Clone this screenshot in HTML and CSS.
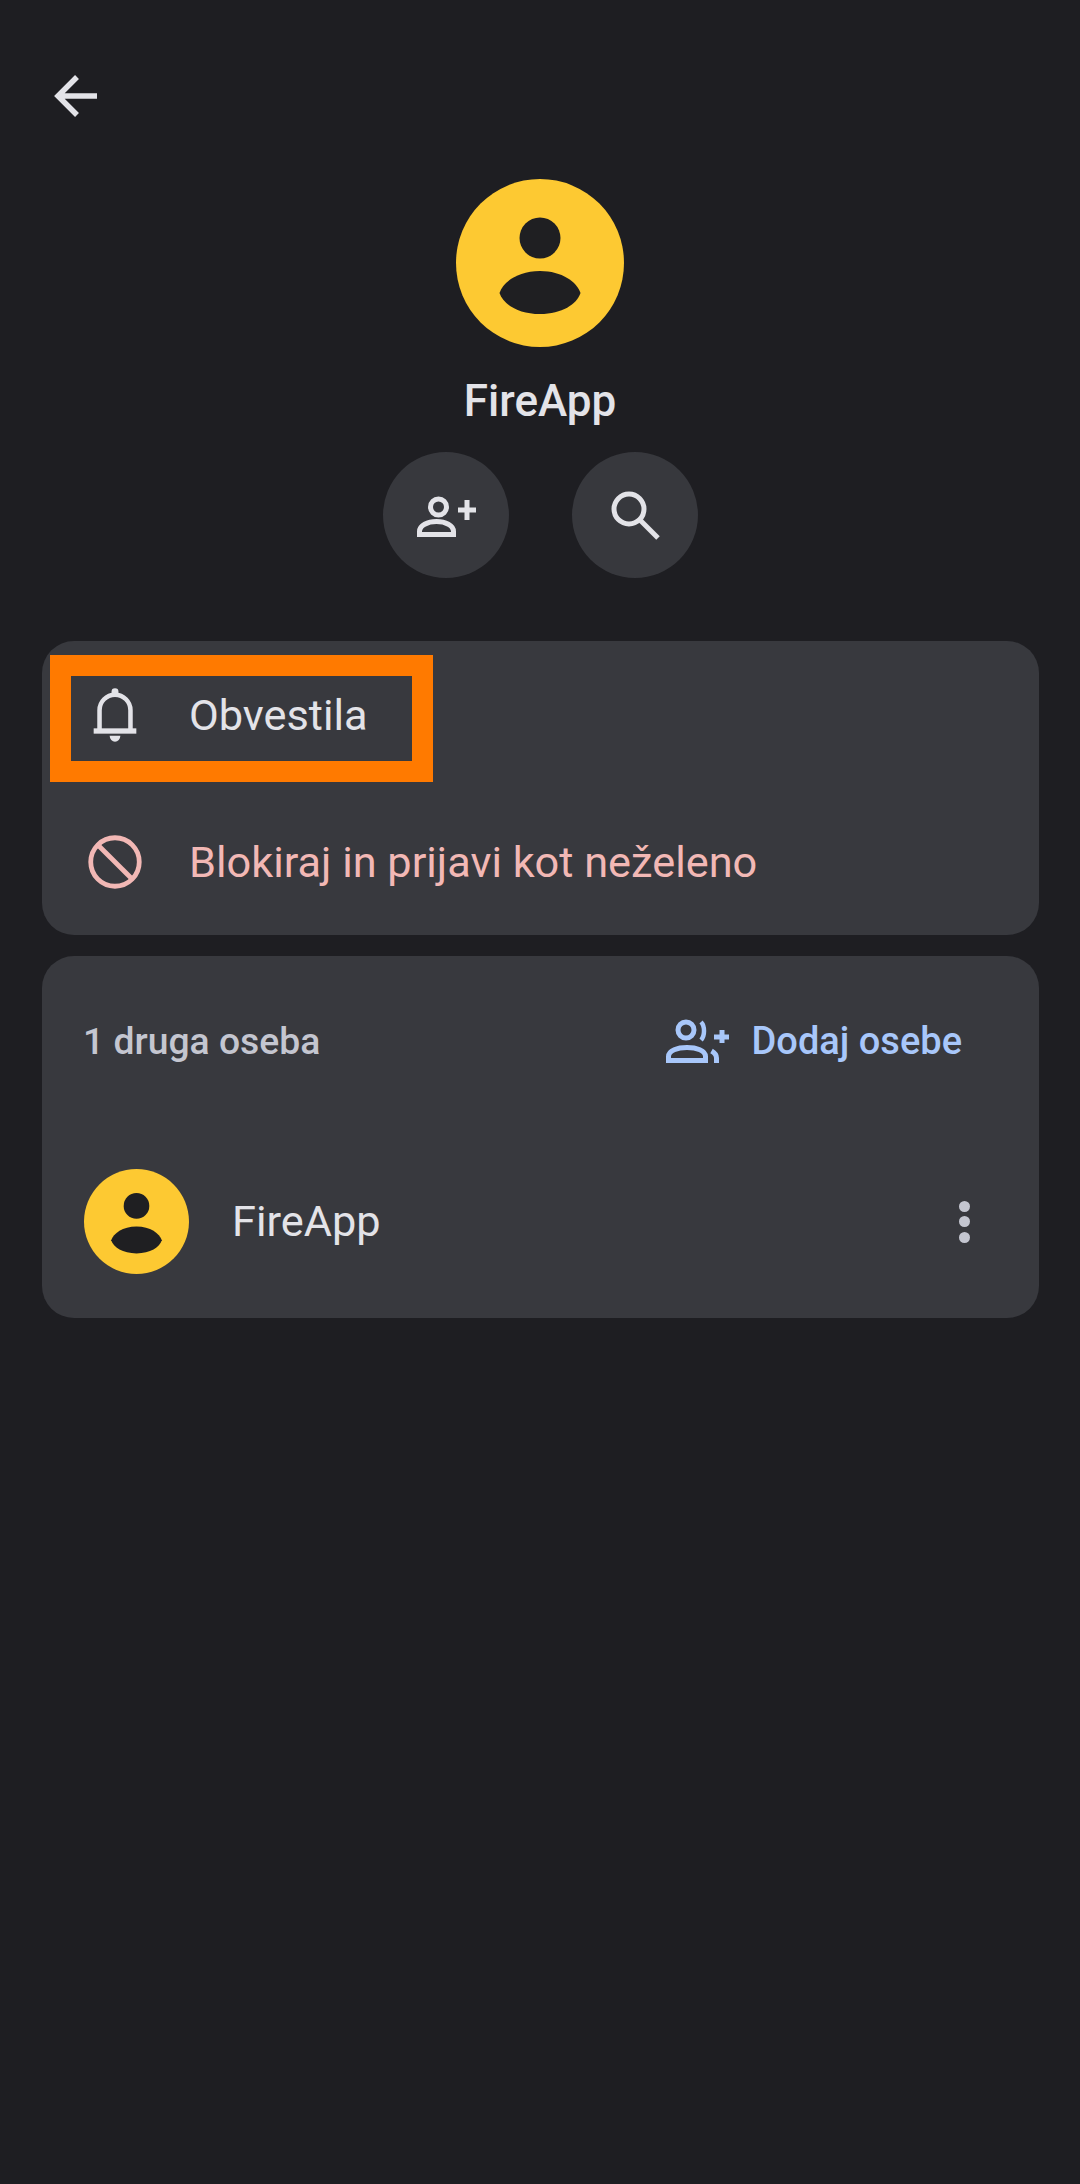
FILE: index.html
```html
<!DOCTYPE html>
<html lang="sl">
<head>
<meta charset="utf-8">
<title>FireApp</title>
<link rel="stylesheet" href="styles.css">
</head>
<body>
<svg class="defs" width="0" height="0" aria-hidden="true">
  <symbol id="person-avatar" viewBox="0 0 168 168">
    <circle cx="84" cy="84" r="84" fill="#fdc932"/>
    <circle cx="84" cy="59" r="20.5" fill="#1f1f22"/>
    <path d="M43.500 114C47 103 62 92 84 92c22 0 37 11 40.500 22-3.500 11-18.500 21-40.500 21s-37-10-40.500-21z" fill="#1f1f22"/>
  </symbol>
</svg>
<main class="page">
  <header class="topbar">
    <button class="back" aria-label="Nazaj">
      <svg class="icon64 stroke-light" viewBox="0 0 64 64"><path d="M53 32H15M33 13L14 32l19 19" stroke-width="5.500"/></svg>
    </button>
  </header>
  <section class="profile">
    <svg class="avatar-large"><use href="#person-avatar"/></svg>
    <h1 class="profile-name">FireApp</h1>
    <div class="actions">
      <button class="action" aria-label="Dodaj osebo">
        <svg class="icon64 stroke-light" viewBox="0 0 64 64">
          <circle cx="24.500" cy="24" r="8" stroke-width="5"/>
          <path d="M5.500 51.500v-3c0-6 8-10 17-10s17 4 17 10v3z" stroke-width="5"/>
          <path d="M53 17v20M44 27h18" stroke-width="5"/>
        </svg>
      </button>
      <button class="action" aria-label="Iskanje">
        <svg class="icon64 stroke-light" viewBox="0 0 64 64">
          <circle cx="26" cy="26" r="15" stroke-width="5"/>
          <path d="M37 37l18 18" stroke-width="5"/>
        </svg>
      </button>
    </div>
  </section>
  <section class="card options">
    <div class="option">
      <svg class="icon64 stroke-light" viewBox="0 0 24 24">
        <path d="M6.200 17.500v-7.300a5.800 5.800 0 0 1 11.600 0v7.300" stroke-width="1.700"/>
        <rect class="solid-light" x="4" y="17" width="16" height="2"/>
        <circle class="solid-light" cx="12" cy="3.300" r="1.300"/>
        <path class="solid-light" d="M10 19.800h4a2 2.200 0 0 1-4 0z"/>
      </svg>
      <span class="option-label">Obvestila</span>
    </div>
    <div class="option danger">
      <svg class="icon64 stroke-pink" viewBox="0 0 24 24">
        <circle cx="12" cy="12" r="9.100" stroke-width="1.800"/>
        <path d="M5.600 5.600l12.800 12.800" stroke-width="1.800"/>
      </svg>
      <span class="option-label">Blokiraj in prijavi kot neželeno</span>
    </div>
    <div class="highlight"></div>
  </section>
  <section class="card people">
    <div class="people-head">
      <span class="people-count">1 druga oseba</span>
      <div class="add-people">
        <svg class="icon64 stroke-blue" viewBox="0 0 64 64">
          <circle cx="20" cy="21" r="8" stroke-width="5"/>
          <path d="M2.500 51.500v-4c0-6 9-9 18.500-9s18.500 3 18.500 9v4z" stroke-width="5"/>
          <path d="M35 13c4 4 4 14 0 18" stroke-width="4.500"/>
          <path d="M50.500 54v-5c0-3-1.500-5-5-7" stroke-width="5"/>
          <path d="M56 21v13M48 28h15" stroke-width="5"/>
        </svg>
        <span class="add-label">Dodaj osebe</span>
      </div>
    </div>
    <div class="person">
      <svg class="avatar-small"><use href="#person-avatar"/></svg>
      <span class="person-name">FireApp</span>
      <div class="dots"><i></i><i></i><i></i></div>
    </div>
  </section>
</main>
</body>
</html>
```

FILE: styles.css
```css
* { box-sizing: border-box; }
html, body { margin: 0; padding: 0; }
body {
  width: 1080px;
  height: 2184px;
  background: #1e1e22;
  color: #e3e3e8;
  font-family: Roboto, "Noto Sans", sans-serif;
  overflow: hidden;
}
.defs { position: absolute; }
.page { display: flex; flex-direction: column; padding: 0 41px 0 42px; }

button { border: 0; padding: 0; background: none; color: inherit; font: inherit; }

.icon64 { display: block; width: 64px; height: 64px; flex: none; fill: none; }
.stroke-light { stroke: #e3e3e8; }
.stroke-pink { stroke: #f2b8b5; }
.stroke-blue { stroke: #a8c7fa; }
.solid-light { fill: #e3e3e8; stroke: none; }

.topbar { height: 179px; padding-top: 64px; }
.back { display: block; margin-left: 2px; width: 64px; height: 64px; }

.profile { display: flex; flex-direction: column; align-items: center; margin-left: -1px; }
.avatar-large { display: block; width: 168px; height: 168px; }
.profile-name {
  margin: 26px 0 0;
  font-size: 44px;
  line-height: 56px;
  font-weight: 500;
  color: #e3e3e8;
}
.actions { display: flex; gap: 63px; margin-top: 23px; }
.action {
  display: flex;
  align-items: center;
  justify-content: center;
  width: 126px;
  height: 126px;
  border-radius: 50%;
  background: #37383d;
}

.card { position: relative; background: #38393e; border-radius: 32px; }
.options { margin-top: 63px; }
.option { display: flex; align-items: center; height: 147px; padding-left: 41px; gap: 42px; }
.option-label { padding-top: 2px; font-size: 43.3px; line-height: 52px; color: #e3e3e8; }
.danger .option-label { color: #f2b8b5; }
.highlight {
  position: absolute;
  left: 8px;
  top: 14px;
  width: 383px;
  height: 127px;
  border: 21px solid #ff7a00;
}

.people { margin-top: 21px; height: 362px; }
.people-head {
  display: flex;
  align-items: center;
  justify-content: space-between;
  height: 170px;
  padding: 0 77px 0 41px;
}
.people-count { font-size: 37.3px; line-height: 48px; font-weight: 500; color: #c4c6d0; }
.add-people { display: flex; align-items: center; gap: 22px; }
.add-label { font-size: 38px; line-height: 48px; font-weight: 500; color: #a8c7fa; }

.person { display: flex; align-items: center; margin-top: 43px; padding: 0 69px 0 42px; }
.avatar-small { display: block; width: 105px; height: 105px; flex: none; }
.person-name { margin-left: 43px; flex: 1; font-size: 43.3px; line-height: 52px; color: #e3e3e8; }
.dots { display: flex; flex-direction: column; gap: 4.5px; }
.dots i { display: block; width: 11px; height: 11px; border-radius: 50%; background: #c4c6d0; }
```
